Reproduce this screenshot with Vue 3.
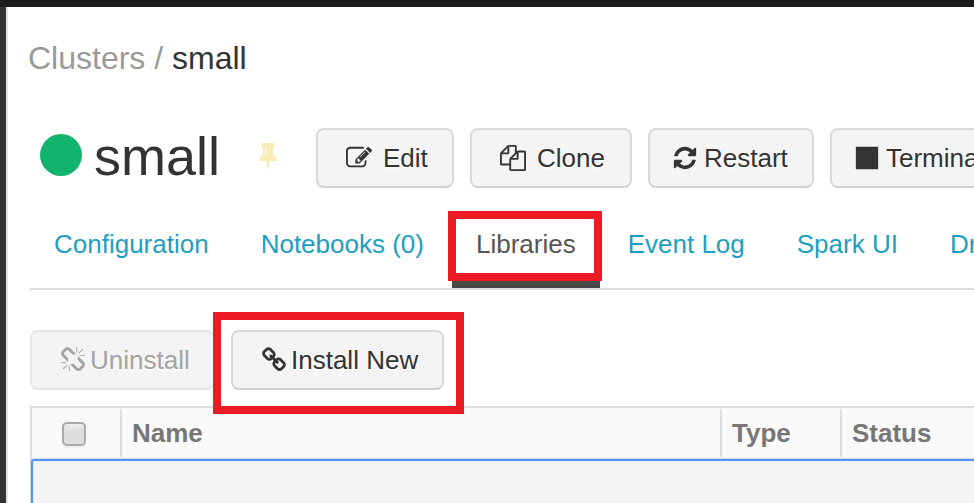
<script setup>
const icons = {
  edit: 'M888 1184l116-116-152-152-116 116v56h96v96h56zm440-720q-16-16-33 1l-350 350q-17 17-1 33t33-1l350-350q17-17 1-33zm80 594v190q0 119-84.5 203.5t-203.5 84.5h-832q-119 0-203.5-84.5t-84.5-203.5v-832q0-119 84.5-203.5t203.5-84.5h832q63 0 117 25 15 7 18 23 3 17-9 29l-49 49q-14 14-32 8-23-6-45-6h-832q-66 0-113 47t-47 113v832q0 66 47 113t113 47h832q66 0 113-47t47-113v-126q0-13 9-22l64-64q15-15 35-7t20 29zm-96-738l288 288-672 672h-288v-288zm444 132l-92 92-288-288 92-92q28-28 68-28t68 28l152 152q28 28 28 68t-28 68z',
  clone: 'M1696 384q40 0 68 28t28 68v1216q0 40-28 68t-68 28h-960q-40 0-68-28t-28-68v-288h-544q-40 0-68-28t-28-68v-672q0-40 20-88t48-76l408-408q28-28 76-48t88-20h416q40 0 68 28t28 68v328q68-40 128-40h416zm-544 213l-299 299h299v-299zm-640-384l-299 299h299v-299zm196 647l316-316v-416h-384v416q0 40-28 68t-68 28h-416v640h512v-256q0-40 20-88t48-76zm956 804v-1152h-384v416q0 40-28 68t-68 28h-416v640h896z',
  restart: 'M1639 1056q0 5-1 7-64 268-268 434.5t-478 166.5q-146 0-282.5-55t-243.5-157l-129 129q-19 19-45 19t-45-19-19-45v-448q0-26 19-45t45-19h448q26 0 45 19t19 45-19 45l-137 137q71 66 161 102t187 36q134 0 250-65t186-179q11-17 53-117 8-23 30-23h192q13 0 22.5 9.5t9.5 22.5zm25-800v448q0 26-19 45t-45 19h-448q-26 0-45-19t-19-45 19-45l138-138q-148-137-349-137-134 0-250 65t-186 179q-11 17-53 117-8 23-30 23h-199q-13 0-22.5-9.5t-9.5-22.5v-7q65-268 270-434.5t480-166.5q146 0 284 55.5t245 156.5l130-129q19-19 45-19t45 19 19 45z',
  terminate: 'M1664 160v1472q0 26-19 32h-1498q-19-6-19-32v-1472q0-26 19-32h1498q19 6 19 32z',
  link: 'M1520 1216q0-40-28-68l-208-208q-28-28-68-28-42 0-72 32 3 3 19 18.500t21.500 21.500 15 19 13 25.500 3.500 27.500q0 40-28 68t-68 28q-15 0-27.500-3.500t-25.500-13-19-15-21.500-21.500-18.500-19q-33 31-33 73 0 40 28 68l206 207q27 27 68 27 40 0 68-26l147-146q28-28 28-67zm-703-705q0-40-28-68l-206-207q-28-28-68-28-39 0-68 27l-147 146q-28 28-28 67 0 40 28 68l208 208q27 27 68 27 42 0 72-31-3-3-19-18.500t-21.500-21.500-15-19-13-25.500-3.500-27.500q0-40 28-68t68-28q15 0 27.500 3.500t25.500 13 19 15 21.500 21.500 18.500 19q33-31 33-73zm895 705q0 120-85 203l-147 146q-83 83-203 83-121 0-204-85l-206-207q-83-83-83-203 0-123 88-209l-88-88q-86 88-208 88-120 0-204-84l-208-208q-84-84-84-204t85-203l147-146q83-83 203-83 121 0 204 85l206 207q83 83 83 203 0 123-88 209l88 88q86-88 208-88 120 0 204 84l208 208q84 84 84 204z',
  unlink: 'M503 1271l-256 256q-10 9-23 9-12 0-23-9-9-10-9-23t9-23l256-256q10-9 23-9t23 9q9 10 9 23t-9 23zm169 41v320q0 14-9 23t-23 9-23-9-9-23v-320q0-14 9-23t23-9 23 9 9 23zm-224-224q0 14-9 23t-23 9h-320q-14 0-23-9t-9-23 9-23 23-9h320q14 0 23 9t9 23zm1264 128q0 120-85 203l-147 146q-83 83-203 83-121 0-204-85l-334-335q-21-21-42-56l239-18 273 274q28 28 68 28t68-27l147-146q28-28 28-67 0-40-28-68l-274-275 18-239q35 21 56 42l336 336q84 86 84 204zm-617-724l-239 18-273-274q-28-28-68-28-39 0-68 27l-147 146q-28 28-28 67 0 40 28 68l274 274-18 240q-35-21-56-42l-336-336q-84-86-84-204 0-120 85-203l147-146q83-83 203-83 121 0 204 85l334 335q21 21 42 56zm633 84q0 14-9 23t-23 9h-320q-14 0-23-9t-9-23 9-23 23-9h320q14 0 23 9t9 23zm-544-544v320q0 14-9 23t-23 9-23-9-9-23v-320q0-14 9-23t23-9 23 9 9 23zm407 151l-256 256q-11 9-23 9t-23-9q-9-10-9-23t9-23l256-256q10-9 23-9t23 9q9 10 9 23t-9 23z',
  pin: 'M800 864v-448q0-14-9-23t-23-9-23 9-9 23v448q0 14 9 23t23 9 23-9 9-23zm672 352q0 26-19 45t-45 19h-429l-51 483q-2 12-10.500 20.500t-20.500 8.500h-1q-27 0-32-27l-76-485h-404q-26 0-45-19t-19-45q0-123 78.500-221.500t177.500-98.500v-512q-52 0-90-38t-38-90 38-90 90-38h640q52 0 90 38t38 90-38 90-90 38v512q99 0 177.500 98.500t78.500 221.500z',
}

const actions = [
  { id: 'edit', label: 'Edit' },
  { id: 'clone', label: 'Clone' },
  { id: 'restart', label: 'Restart' },
  { id: 'terminate', label: 'Terminate' },
]

const tabs = ['Configuration', 'Notebooks (0)', 'Libraries', 'Event Log', 'Spark UI', 'Driver Logs']
const activeTab = 'Libraries'
</script>

<template>
  <div class="screen">
    <div class="topbar"></div>
    <div class="body">
      <div class="sidebar"></div>
      <main class="content">
        <div class="breadcrumb"><span class="parent">Clusters / </span>small</div>

        <header class="title-row">
          <span class="status-dot"></span>
          <h1>small</h1>
          <svg class="pin" viewBox="0 0 1792 1792"><path :d="icons.pin" /></svg>
          <div class="actions">
            <button v-for="a in actions" :key="a.id" class="btn" :class="a.id">
              <svg class="icon" viewBox="0 0 1792 1792"><path :d="icons[a.id]" /></svg>
              <span>{{ a.label }}</span>
            </button>
          </div>
        </header>

        <nav class="tabs">
          <a v-for="t in tabs" :key="t" class="tab" :class="{ active: t === activeTab }">
            {{ t }}<span v-if="t === activeTab" class="highlight tab-highlight"></span>
          </a>
        </nav>

        <div class="toolbar">
          <button class="btn uninstall" disabled>
            <svg class="icon" viewBox="0 0 1792 1792"><path :d="icons.unlink" /></svg>
            <span>Uninstall</span>
          </button>
          <div class="install-wrap">
            <button class="btn install">
              <svg class="icon" viewBox="0 0 1792 1792"><path :d="icons.link" /></svg>
              <span>Install New</span>
            </button>
            <span class="highlight install-highlight"></span>
          </div>
        </div>

        <section class="table">
          <div class="thead">
            <div class="th check"><span class="checkbox"></span></div>
            <div class="th name">Name</div>
            <div class="th type">Type</div>
            <div class="th">Status</div>
          </div>
          <div class="grid-body"></div>
        </section>
      </main>
    </div>
  </div>
</template>

<style>
body {
  margin: 0;
  overflow: hidden;
}
</style>

<style scoped>
.screen {
  box-sizing: border-box;
  width: 974px;
  height: 503px;
  overflow: hidden;
  display: flex;
  flex-direction: column;
  background: #fff;
  color: #333;
  font-family: "Liberation Sans", Arial, sans-serif;
  font-size: 26px;
  line-height: 30px;
}
.screen * {
  box-sizing: border-box;
}
.topbar {
  height: 7px;
  flex: none;
  background: #1c1c1c;
}
.body {
  flex: 1;
  display: flex;
  min-height: 0;
}
.sidebar {
  width: 8px;
  flex: none;
  background: #333;
  border-right: 2px solid #e8e6e4;
}
.content {
  flex: 1;
  min-width: 0;
  padding-left: 22px;
}
.breadcrumb {
  margin: 31px 0 0 -2px;
  height: 40px;
  font-size: 32px;
  line-height: 40px;
  white-space: pre;
}
.parent {
  color: #999;
}
.title-row {
  display: flex;
  height: 60px;
  margin-top: 50px;
  align-items: center;
}
.status-dot {
  width: 42px;
  height: 42px;
  flex: none;
  margin: 0 0 6px 10px;
  border-radius: 50%;
  background: #12b36c;
}
h1 {
  width: 126px;
  flex: none;
  margin: 0 0 4px 12px;
  font-size: 54px;
  line-height: 58px;
  font-weight: 400;
}
.pin {
  width: 28px;
  height: 28px;
  flex: none;
  margin: 0 0 6px 34px;
  fill: #f9ebb8;
}
.actions {
  display: flex;
  gap: 16px;
  margin-left: 34px;
}
.btn {
  display: flex;
  align-items: center;
  flex: none;
  height: 60px;
  margin: 0;
  padding: 0 0 0 28px;
  border: 2px solid #d9d9d9;
  border-bottom-color: #d0d0d0;
  border-radius: 8px;
  background: #f4f4f4;
  color: #333;
  font: inherit;
  text-shadow: 0 2px 2px rgba(255, 255, 255, 0.75);
  white-space: nowrap;
}
.icon {
  width: 26px;
  height: 26px;
  flex: none;
  fill: currentColor;
}
.edit {
  width: 138px;
}
.clone {
  width: 162px;
}
.edit span,
.clone span {
  margin-left: 11px;
}
.restart {
  width: 166px;
  padding-left: 22px;
}
.terminate {
  width: 190px;
  padding-left: 22px;
}
.restart span,
.terminate span {
  margin-left: 6px;
}
.tabs {
  display: flex;
  gap: 4px;
  height: 86px;
  margin-top: 16px;
  border-bottom: 2px solid #ddd;
}
.tab {
  position: relative;
  flex: none;
  padding: 25px 24px 0;
  color: #1c9fc1;
  white-space: nowrap;
}
.tab.active {
  color: #555;
  border-bottom: 8px solid #484848;
}
.highlight {
  position: absolute;
  border: 8px solid #ed1c24;
  pointer-events: none;
}
.tab-highlight {
  left: -4px;
  top: 7px;
  width: 154px;
  height: 70px;
}
.toolbar {
  display: flex;
  height: 60px;
  margin-top: 40px;
}
.uninstall {
  width: 185px;
  border-color: #e6e6e6;
  color: #a3a3a3;
}
.install-wrap {
  position: relative;
  margin-left: 16px;
}
.install {
  width: 213px;
}
.uninstall span,
.install span {
  margin-left: 4px;
}
.install-highlight {
  left: -18px;
  top: -18px;
  width: 251px;
  height: 102px;
}
.table {
  margin-top: 16px;
  border-top: 2px solid #ddd;
  border-left: 2px solid #ddd;
}
.thead {
  display: flex;
  height: 51px;
  padding-bottom: 1px;
  background: #fafafa;
  border-bottom: 1px solid #ddd;
  color: #777;
  font-weight: 700;
}
.th {
  height: 48px;
  margin-top: 1px;
  padding: 9px 0 0 10px;
  line-height: 30px;
  flex: none;
}
.check {
  width: 90px;
  border-right: 2px solid #ddd;
  padding: 13px 0 0 30px;
}
.checkbox {
  display: block;
  width: 24px;
  height: 24px;
  border: 2px solid #aaa;
  border-radius: 5px;
  background: linear-gradient(#eee, #ddd 40%, #dedede);
  box-shadow: 0 2px 1px #eee;
}
.name {
  width: 600px;
  border-right: 2px solid #ddd;
}
.type {
  width: 120px;
  border-right: 2px solid #ddd;
}
.grid-body {
  height: 60px;
  margin-left: -1px;
  border: 2px solid #4d90fe;
  border-right: 0;
  border-top-left-radius: 3px;
  background: #f4f4f4;
}
</style>
